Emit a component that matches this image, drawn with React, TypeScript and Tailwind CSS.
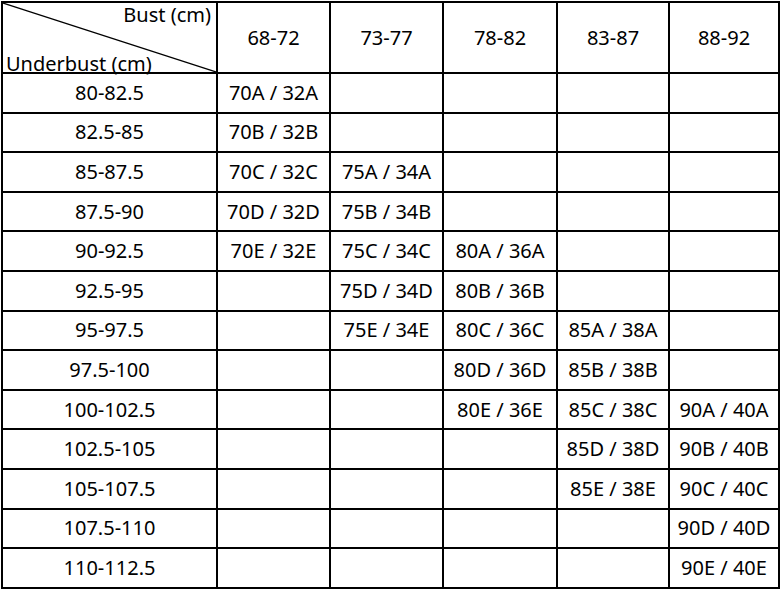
import React from "react";

const cols = ["68-72", "73-77", "78-82", "83-87", "88-92"];
const rows: [string, string[]][] = [
  ["80-82.5", ["70A / 32A", "", "", "", ""]],
  ["82.5-85", ["70B / 32B", "", "", "", ""]],
  ["85-87.5", ["70C / 32C", "75A / 34A", "", "", ""]],
  ["87.5-90", ["70D / 32D", "75B / 34B", "", "", ""]],
  ["90-92.5", ["70E / 32E", "75C / 34C", "80A / 36A", "", ""]],
  ["92.5-95", ["", "75D / 34D", "80B / 36B", "", ""]],
  ["95-97.5", ["", "75E / 34E", "80C / 36C", "85A / 38A", ""]],
  ["97.5-100", ["", "", "80D / 36D", "85B / 38B", ""]],
  ["100-102.5", ["", "", "80E / 36E", "85C / 38C", "90A / 40A"]],
  ["102.5-105", ["", "", "", "85D / 38D", "90B / 40B"]],
  ["105-107.5", ["", "", "", "85E / 38E", "90C / 40C"]],
  ["107.5-110", ["", "", "", "", "90D / 40D"]],
  ["110-112.5", ["", "", "", "", "90E / 40E"]],
];

export default function App() {
  return (
    <div className="w-[781px] h-[590px] bg-white overflow-hidden" style={{ fontFamily: '"Noto Sans", "Noto Sans CJK SC", sans-serif' }}>
      <div className="ml-[1px] mt-[1px] inline-grid bg-black p-[2px] gap-[2px] grid-cols-[213px_111px_111px_112px_110px_108px] grid-rows-[69px_repeat(13,37.6px)] text-[20px] text-black">
        <div className="relative bg-white">
          <svg className="absolute inset-0" width="213" height="69" viewBox="0 0 213 69">
            <line x1="0" y1="0" x2="213" y2="69" stroke="#000" strokeWidth="1.2" />
          </svg>
          <div className="absolute right-[5px] top-[-1px] leading-[26px]">Bust (cm)</div>
          <div className="absolute left-[3px] bottom-[-5px] leading-[26px]">Underbust (cm)</div>
        </div>
        {cols.map((c) => (
          <div key={c} className="bg-white flex items-center justify-center">{c}</div>
        ))}
        {rows.map(([label, cells]) => (
          <React.Fragment key={label}>
            <div className="bg-white flex items-center justify-center">{label}</div>
            {cells.map((v, i) => (
              <div key={i} className="bg-white flex items-center justify-center whitespace-nowrap">{v}</div>
            ))}
          </React.Fragment>
        ))}
      </div>
    </div>
  );
}
